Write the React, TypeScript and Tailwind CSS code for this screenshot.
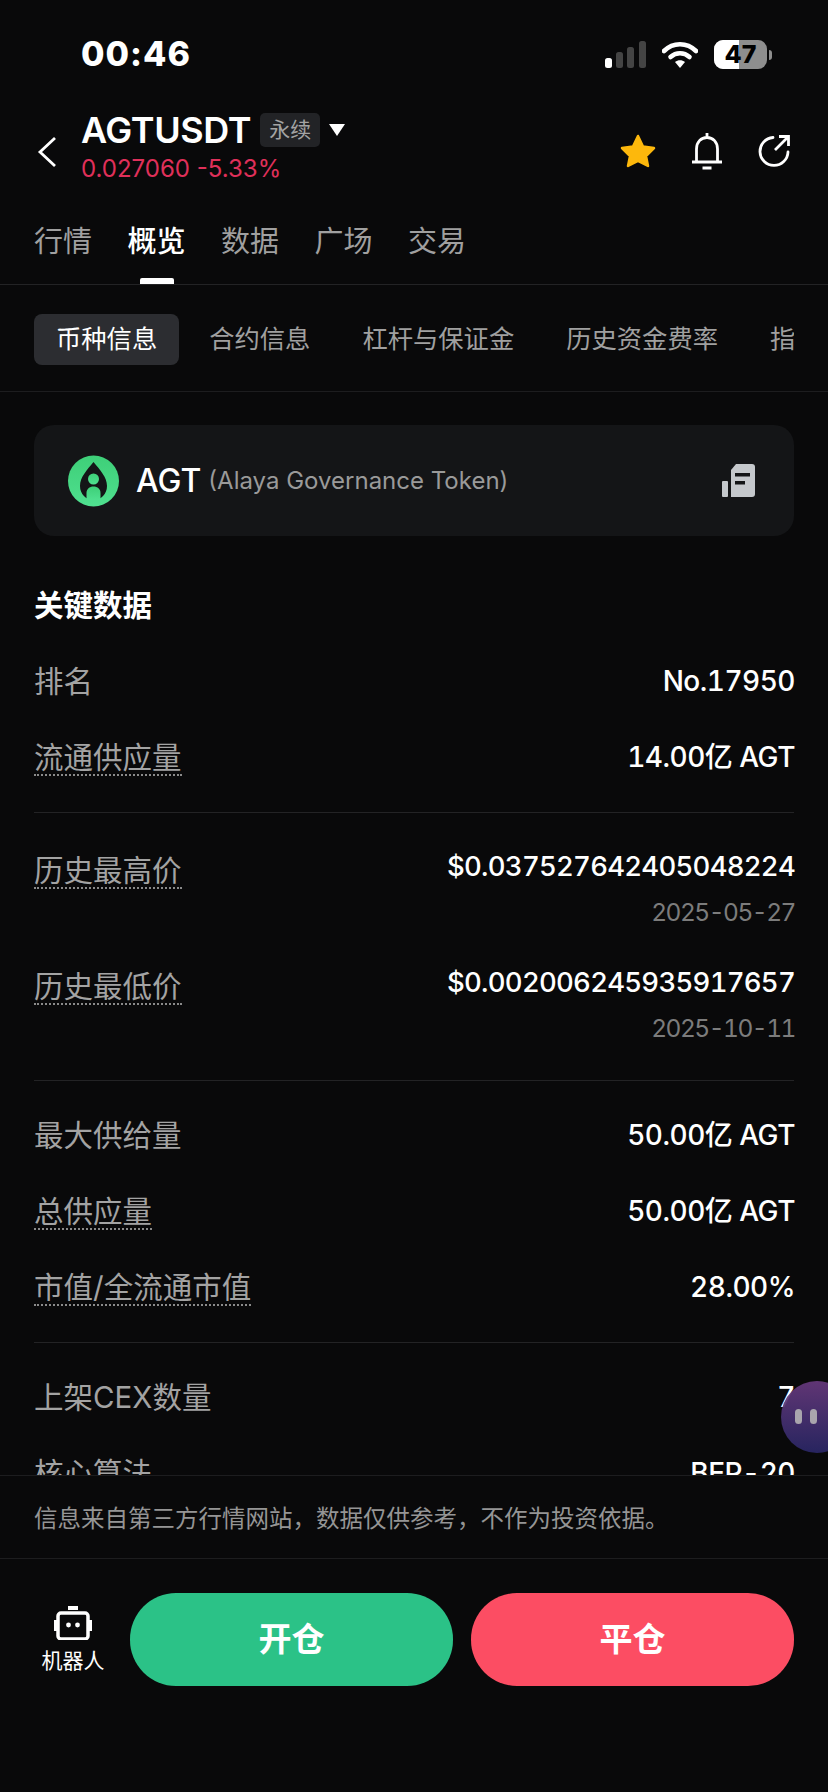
import React from "react";

function Row({ label, dotted, value }: { label: string; dotted?: boolean; value: string }) {
  return (
    <div className="flex h-[76px] items-center justify-between">
      <span className={`text-[29.5px] text-[#a3a3a3] ${dotted ? "border-b-2 border-dotted border-[#8a8a8a] pt-[2px] leading-[34px]" : "leading-[36px]"}`}>{label}</span>
      <span className="mr-[-1px] text-[28px] font-[450] leading-[36px] tracking-[-0.5px] text-white tabular-nums">{value}</span>
    </div>
  );
}

function PriceRow({ label, value, date }: { label: string; value: string; date: string }) {
  return (
    <div className="flex h-[116px] items-start justify-between">
      <span className="mt-[22px] border-b-2 border-dotted border-[#8a8a8a] pt-[2px] text-[29.5px] leading-[34px] text-[#a3a3a3]">{label}</span>
      <div className="mr-[-1px] flex flex-col items-end pt-[19px]">
        <span className="text-[27.5px] font-[450] leading-[36px] tracking-[-0.75px] text-white tabular-nums">{value}</span>
        <span className="mt-[10px] text-[24.5px] leading-[36px] tracking-[-1.5px] text-[#7c7c7c] tabular-nums">{date}</span>
      </div>
    </div>
  );
}

function Divider() {
  return <div className="h-px bg-[#232325]" />;
}

export default function App() {
  return (
    <div className="relative flex h-[1792px] w-[828px] flex-col overflow-hidden bg-[#09090a] font-['Inter','Noto_Sans_CJK_SC',sans-serif] text-white">
      {/* status bar */}
      <div className="flex h-[100px] shrink-0 items-start justify-between pl-[81px] pr-[56px] pt-[34px]">
        <span className="text-[34px] font-extrabold leading-[40px] tracking-[1px]">00:46</span>
        <div className="flex items-center pt-[6px]">
          <svg width="43" height="28" viewBox="0 0 43 28">
            <rect x="1" y="17" width="7" height="10" rx="2.5" fill="#fff" />
            <rect x="12" y="11" width="7" height="16" rx="2.5" fill="#444" />
            <rect x="23" y="6" width="7" height="21" rx="2.5" fill="#444" />
            <rect x="35" y="0" width="7" height="27" rx="2.5" fill="#444" />
          </svg>
          <svg className="ml-[15px]" width="36" height="28" viewBox="0 0 36 28">
            <path d="M2 10 C11 1 25 1 34 10" fill="none" stroke="#fff" strokeWidth="4.6" strokeLinecap="round" />
            <path d="M8.5 16 C14 11 22 11 27.5 16" fill="none" stroke="#fff" strokeWidth="4.6" strokeLinecap="round" />
            <path d="M13 21 L18 27 L23 21 C20 18.5 16 18.5 13 21 Z" fill="#fff" />
          </svg>
          <div className="relative ml-[16px] flex h-[29px] w-[53px] items-center justify-center overflow-hidden rounded-[9px] bg-[#8e8e8e]">
            <div className="absolute inset-y-0 left-0 w-[25px] bg-white" />
            <span className="relative text-[25px] font-extrabold leading-none text-black">47</span>
          </div>
          <div className="ml-[2px] h-[10px] w-[3px] rounded-r-full bg-[#8e8e8e]" />
        </div>
      </div>

      {/* title */}
      <div className="flex h-[90px] shrink-0 items-start pl-[37px] pr-[37px]">
        <svg className="mt-[36px]" width="20" height="32" viewBox="0 0 20 32">
          <path d="M18 2 L3 16 L18 30" fill="none" stroke="#fff" strokeWidth="2.8" />
        </svg>
        <div className="ml-[24px] mt-[9px] flex flex-col">
          <div className="flex items-center">
            <span className="text-[36px] font-semibold leading-[42px] tracking-[-0.4px]">AGTUSDT</span>
            <span className="ml-[9px] flex h-[34px] w-[60px] items-center justify-center rounded-[5px] bg-[#222326] text-[21px] text-[#a3a3a3]">永续</span>
            <svg className="ml-[9px]" width="16" height="12" viewBox="0 0 16 12">
              <path d="M0 0 H16 L8 12 Z" fill="#fff" />
            </svg>
          </div>
          <span className="mt-[3px] text-[24px] leading-[30px] text-[#e0305a]">0.027060 -5.33%</span>
        </div>
        <div className="ml-auto mt-[32px] flex items-center gap-[34px]">
          <svg width="38" height="36" viewBox="0 0 38 36">
            <path d="M19 3 L24 13.5 L35 15 L27 23 L29 33 L19 28 L9 33 L11 23 L3 15 L14 13.5 Z" fill="#fdb80c" stroke="#fdb80c" strokeWidth="2.5" strokeLinejoin="round" />
          </svg>
          <svg width="32" height="38" viewBox="0 0 32 38">
            <path d="M16 1 V5 M1 30 H31 M5.5 30 V17 C5.5 10 10 5.5 16 5.5 C22 5.5 26.5 10 26.5 17 V30 M11.5 36 H20.5" fill="none" stroke="#fff" strokeWidth="2.8" />
          </svg>
          <svg width="34" height="34" viewBox="0 0 34 34">
            <path d="M16 3.5 A14 14 0 1 0 31 18" fill="none" stroke="#fff" strokeWidth="2.8" strokeLinecap="round" />
            <path d="M18 16 L31 3 M22 2.5 H31.5 V12" fill="none" stroke="#fff" strokeWidth="2.8" />
          </svg>
        </div>
      </div>

      {/* main tabs */}
      <div className="flex h-[95px] shrink-0 gap-[35.5px] border-b border-[#232325] px-[34px] pt-[32px]">
        {["行情", "概览", "数据", "广场", "交易"].map((t, i) => (
          <div key={t} className="relative h-full">
            <span className={`text-[29px] leading-[40px] ${i === 1 ? "font-medium text-white" : "text-[#a0a0a0]"}`}>{t}</span>
            {i === 1 && <div className="absolute bottom-0 left-[12px] h-[6px] w-[34px] rounded-t-[2px] bg-white" />}
          </div>
        ))}
      </div>

      {/* sub tabs */}
      <div className="h-[107px] shrink-0 border-b border-[#1d1d1f] px-[34px] pt-[29px]">
        <div className="flex items-start gap-[8px] overflow-hidden">
          {["币种信息", "合约信息", "杠杆与保证金", "历史资金费率", "指标"].map((t, i) => (
            <span key={t} className={`flex h-[51px] shrink-0 items-center rounded-[8px] px-[22px] pb-[2px] text-[25.3px] ${i === 0 ? "bg-[#2c2d31] text-white" : "text-[#a0a0a0]"}`}>{t}</span>
          ))}
        </div>
      </div>

      {/* scroll area */}
      <div className="min-h-0 flex-1 overflow-hidden px-[34px] pt-[33px]">
        <div className="flex h-[111px] items-center rounded-[20px] bg-[#141517] pl-[34px] pr-[39px]">
          <svg width="51" height="52" viewBox="0 0 51 52">
            <defs>
              <linearGradient id="agt" x1="0" y1="0" x2="0" y2="1">
                <stop offset="0" stopColor="#3ecf78" />
                <stop offset="1" stopColor="#4fe08f" />
              </linearGradient>
            </defs>
            <circle cx="25.5" cy="26" r="25.5" fill="url(#agt)" />
            <path d="M25.5 7 C32 15 39 22 39 31 C39 39 33 45 25.5 45 C18 45 12 39 12 31 C12 22 19 15 25.5 7 Z" fill="#141517" />
            <circle cx="25.5" cy="24" r="5.5" fill="url(#agt)" />
            <path d="M18.5 45 V38 C18.5 34 21.5 31.5 25.5 31.5 C29.5 31.5 32.5 34 32.5 38 V45 Z" fill="url(#agt)" />
          </svg>
          <span className="ml-[17px] text-[32px] font-medium leading-none">AGT</span>
          <span className="ml-[7px] text-[24px] leading-none text-[#9a9a9a]">(Alaya Governance Token)</span>
          <svg className="ml-auto" width="33" height="33" viewBox="0 0 33 33">
            <rect x="0" y="17" width="6" height="16" rx="1" fill="#c5c8cc" />
            <path d="M14 0 H30 Q33 0 33 3 V30 Q33 33 30 33 H9 V6 Z" fill="#c5c8cc" />
            <rect x="13" y="9" width="15" height="3.5" fill="#141517" />
            <rect x="13" y="17" width="10" height="3.5" fill="#141517" />
          </svg>
        </div>

        <div className="mt-[49px] flex h-[40px] items-center text-[29.5px] font-bold">关键数据</div>

        <div className="mt-[18px]">
          <Row label="排名" value="No.17950" />
          <Row label="流通供应量" dotted value="14.00亿 AGT" />
        </div>
        <div className="mt-[17px]"><Divider /></div>

        <div className="mt-[16px]">
          <PriceRow label="历史最高价" value="$0.037527642405048224" date="2025-05-27" />
          <PriceRow label="历史最低价" value="$0.002006245935917657" date="2025-10-11" />
        </div>
        <div className="mt-[19px]"><Divider /></div>

        <div className="mt-[16px]">
          <Row label="最大供给量" value="50.00亿 AGT" />
          <Row label="总供应量" dotted value="50.00亿 AGT" />
          <Row label="市值/全流通市值" dotted value="28.00%" />
        </div>
        <div className="mt-[17px]"><Divider /></div>

        <div className="mt-[16px]">
          <Row label="上架CEX数量" value="7" />
          <Row label="核心算法" value="BEP-20" />
        </div>
      </div>

      {/* disclaimer */}
      <div className="flex h-[84px] shrink-0 items-center border-y border-[#1d1d1f] bg-[#09090a] pl-[34px] pt-[3px] text-[23.5px] text-[#959595]">
        信息来自第三方行情网站，数据仅供参考，不作为投资依据。
      </div>

      {/* actions */}
      <div className="flex h-[233px] shrink-0 items-start pl-[40px] pr-[34px] pt-[34px]">
        <div className="flex w-[66px] flex-col items-center pt-[13px]">
          <svg width="38" height="34" viewBox="0 0 38 34">
            <rect x="14" y="0" width="10" height="4" fill="#fff" />
            <rect x="4" y="7" width="30" height="26" rx="3" fill="none" stroke="#fff" strokeWidth="3.5" />
            <rect x="0" y="14" width="3" height="11" fill="#fff" />
            <rect x="35" y="14" width="3" height="11" fill="#fff" />
            <circle cx="14.5" cy="19" r="2.4" fill="#fff" />
            <circle cx="23.5" cy="19" r="2.4" fill="#fff" />
          </svg>
          <span className="mt-[7px] whitespace-nowrap text-[21px] leading-[28px]">机器人</span>
        </div>
        <button className="ml-[24px] h-[93px] w-[323px] rounded-[46px] bg-[#2bc287] text-[33px] font-bold text-white">开仓</button>
        <button className="ml-[18px] h-[93px] w-[323px] rounded-[46px] bg-[#fc4d63] text-[33px] font-bold text-white">平仓</button>
      </div>

      {/* floating assistant */}
      <div className="absolute left-[781px] top-[1381px] flex h-[72px] w-[72px] gap-[8px] rounded-full bg-gradient-to-b from-[#6a3a80]/90 to-[#27245f] pl-[14px] pt-[28px]">
        <div className="h-[15px] w-[7px] rounded-full bg-[#a9a5ad]" />
        <div className="h-[15px] w-[7px] rounded-full bg-[#a9a5ad]" />
      </div>
    </div>
  );
}
